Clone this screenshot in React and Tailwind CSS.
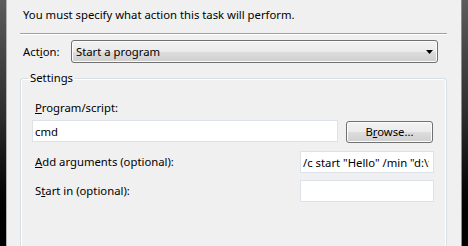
import React from "react";

const btnBg =
  "bg-[linear-gradient(to_bottom,#f2f2f2_0%,#ebebeb_50%,#dddddd_50%,#cfcfcf_100%)]";

const TextBox = ({ value, className }) => (
  <input
    readOnly
    defaultValue={value}
    className={`h-[22px] border border-[#dde2e8] bg-white pl-[2px] pr-[4px] text-[11.3px] text-black outline-none ${className}`}
  />
);

const App = () => {
  return (
    <div className="flex h-[246px] w-[468px] overflow-hidden font-['Noto_Sans',sans-serif] text-[11.3px] leading-[16px] text-black">
      {/* window frame left */}
      <div className="w-[6px] bg-linear-to-b from-[#5c5c5c] via-[#2a2a2a] to-[#000000]" />
      <div className="w-px bg-[#b4b4b4]" />

      <main className="flex flex-1 flex-col bg-[#f0f0f0] pl-[13px] pr-[14px]">
        <p className="pl-[3px] pt-[7px]">
          You must specify what action this task will perform.
        </p>
        <div className="mt-[10px] h-[2px] border-t border-b border-t-[#a0a0a0] border-b-white" />

        <div className="mt-[5px] flex items-center">
          <label className="w-[51px] pl-[3px]">
            Act<span className="underline">i</span>on:
          </label>
          <div
            className={`flex h-[23px] w-[367px] items-center justify-between rounded-[3px] border border-[#707070] pl-[4px] pr-[4px] shadow-[inset_0_0_0_1px_#fcfcfc] ${btnBg}`}
          >
            <span>Start a program</span>
            <svg width="7" height="4" viewBox="0 0 7 4">
              <polygon points="0,0 7,0 3.5,4" fill="#000" />
            </svg>
          </div>
        </div>

        <fieldset className="mt-[7px] h-[200px] shrink-0 rounded-[3px] border border-[#d5dfe5] pl-[11px] pr-[12px] pt-[14px] shadow-[inset_0_0_0_1px_#ffffff]">
          <legend className="ml-[-4px] px-[2px]">Settings</legend>

          <label className="block pl-[3px]">
            <span className="underline">P</span>rogram/script:
          </label>
          <div className="mt-[4px] flex items-start gap-[8px]">
            <TextBox value="cmd" className="w-[306px]" />
            <button
              className={`mt-[1px] h-[22px] w-[87px] rounded-[3px] border border-[#707070] text-[11.3px] shadow-[inset_0_0_0_1px_#fcfcfc] ${btnBg}`}
            >
              B<span className="underline">r</span>owse...
            </button>
          </div>

          <div className="mt-[8px] flex items-center justify-between">
            <label className="pl-[3px]">
              <span className="underline">A</span>dd arguments (optional):
            </label>
            <TextBox
              value={'/c start "Hello" /min "d:\\test.bat"'}
              className="w-[134px]"
            />
          </div>

          <div className="mt-[7px] flex items-center justify-between">
            <label className="pl-[3px]">
              S<span className="underline">t</span>art in (optional):
            </label>
            <TextBox value="" className="w-[134px]" />
          </div>
        </fieldset>
      </main>

      {/* window frame right */}
      <div className="w-px bg-[#8c8c8c]" />
      <div className="w-[6px] bg-linear-to-b from-[#5c5c5c] via-[#2a2a2a] to-[#000000]" />
    </div>
  );
};

export default App;
